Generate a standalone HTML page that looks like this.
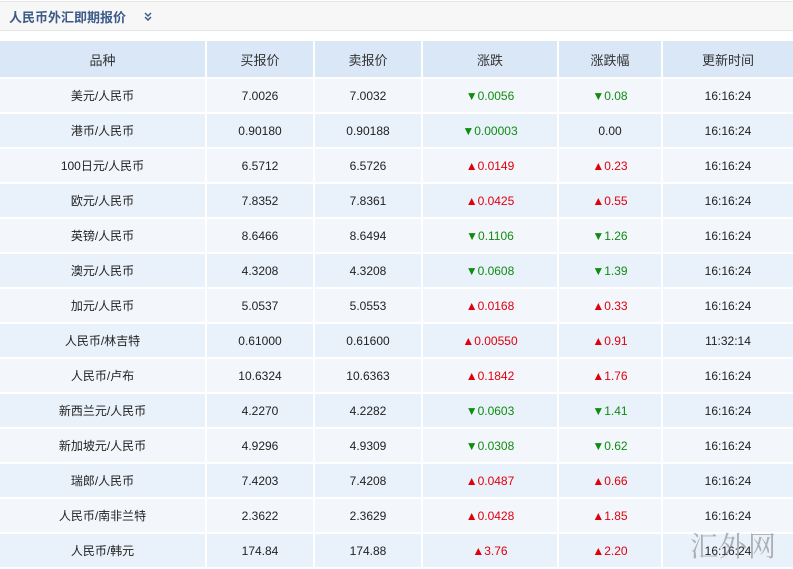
<!DOCTYPE html>
<html><head><meta charset="utf-8"><style>
body{margin:0;width:793px;height:568px;overflow:hidden;background:#fff;font-family:"Liberation Sans","Noto Sans CJK SC",sans-serif;position:relative}
.bar{position:absolute;left:0;top:1px;width:793px;height:28px;background:#f7f7f7;border-top:1px solid #e4e4e4;border-bottom:1px solid #e4e4e4}
.bar span{position:absolute;left:9px;top:5px;font-size:13px;font-weight:bold;color:#3d5b88}
.bar svg{position:absolute;left:144px;top:10px}
table{position:absolute;left:-2px;top:39px;width:797px;table-layout:fixed;border-collapse:separate;border-spacing:2px;font-size:12px;color:#222}
td,th{text-align:center;padding:0}
th{background:#dae7f7;height:36px;font-weight:normal;font-size:13px;color:#333}
td{height:33px}
tr:nth-child(even) td{background:#f3f7fc}
tr:nth-child(odd) td{background:#e9f1fb}
.u{color:#e0000b}.d{color:#108c10}
.wm{position:absolute;left:690px;top:525px;font-family:"Noto Serif CJK SC",serif;font-size:28px;color:rgba(120,120,120,.55);letter-spacing:1px}
</style></head><body>
<div class="bar"><span>人民币外汇即期报价</span><svg width="8" height="9" viewBox="0 0 8 9"><path d="M1 1L4 4L7 1M1 5L4 8L7 5" fill="none" stroke="#3d5b88" stroke-width="1.5"/></svg></div>
<table>
<colgroup><col style="width:205px"><col style="width:106px"><col style="width:106px"><col style="width:134px"><col style="width:102px"><col style="width:130px"></colgroup>
<tr><th>品种</th><th>买报价</th><th>卖报价</th><th>涨跌</th><th>涨跌幅</th><th>更新时间</th></tr>
<tr><td>美元/人民币</td><td>7.0026</td><td>7.0032</td><td class="d">▼0.0056</td><td class="d">▼0.08</td><td>16:16:24</td></tr>
<tr><td>港币/人民币</td><td>0.90180</td><td>0.90188</td><td class="d">▼0.00003</td><td>0.00</td><td>16:16:24</td></tr>
<tr><td>100日元/人民币</td><td>6.5712</td><td>6.5726</td><td class="u">▲0.0149</td><td class="u">▲0.23</td><td>16:16:24</td></tr>
<tr><td>欧元/人民币</td><td>7.8352</td><td>7.8361</td><td class="u">▲0.0425</td><td class="u">▲0.55</td><td>16:16:24</td></tr>
<tr><td>英镑/人民币</td><td>8.6466</td><td>8.6494</td><td class="d">▼0.1106</td><td class="d">▼1.26</td><td>16:16:24</td></tr>
<tr><td>澳元/人民币</td><td>4.3208</td><td>4.3208</td><td class="d">▼0.0608</td><td class="d">▼1.39</td><td>16:16:24</td></tr>
<tr><td>加元/人民币</td><td>5.0537</td><td>5.0553</td><td class="u">▲0.0168</td><td class="u">▲0.33</td><td>16:16:24</td></tr>
<tr><td>人民币/林吉特</td><td>0.61000</td><td>0.61600</td><td class="u">▲0.00550</td><td class="u">▲0.91</td><td>11:32:14</td></tr>
<tr><td>人民币/卢布</td><td>10.6324</td><td>10.6363</td><td class="u">▲0.1842</td><td class="u">▲1.76</td><td>16:16:24</td></tr>
<tr><td>新西兰元/人民币</td><td>4.2270</td><td>4.2282</td><td class="d">▼0.0603</td><td class="d">▼1.41</td><td>16:16:24</td></tr>
<tr><td>新加坡元/人民币</td><td>4.9296</td><td>4.9309</td><td class="d">▼0.0308</td><td class="d">▼0.62</td><td>16:16:24</td></tr>
<tr><td>瑞郎/人民币</td><td>7.4203</td><td>7.4208</td><td class="u">▲0.0487</td><td class="u">▲0.66</td><td>16:16:24</td></tr>
<tr><td>人民币/南非兰特</td><td>2.3622</td><td>2.3629</td><td class="u">▲0.0428</td><td class="u">▲1.85</td><td>16:16:24</td></tr>
<tr><td>人民币/韩元</td><td>174.84</td><td>174.88</td><td class="u">▲3.76</td><td class="u">▲2.20</td><td>16:16:24</td></tr>
</table>
<div class="wm">汇外网</div>
</body></html>
